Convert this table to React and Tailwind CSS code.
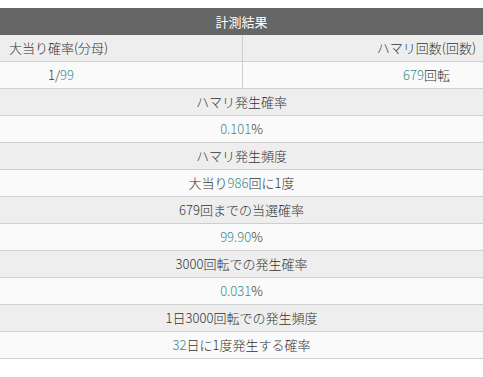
const font = { fontFamily: '"Noto Sans CJK JP", sans-serif' };

function Num({ children }) {
  return <span className="text-[#3f8a8c]">{children}</span>;
}

const rows = [
  { label: 'ハマリ発生確率', value: <><Num>0.101</Num>%</> },
  { label: 'ハマリ発生頻度', value: <>大当り<Num>986</Num>回に1度</> },
  { label: '679回までの当選確率', value: <><Num>99.90</Num>%</> },
  { label: '3000回転での発生確率', value: <><Num>0.031</Num>%</> },
  { label: '1日3000回転での発生頻度', value: <><Num>32</Num>日に1度発生する確率</> },
];

export default function App() {
  return (
    <div className="min-h-[377px] bg-white pt-2 text-[13px] font-light text-[#333]" style={font}>
      <div className="w-full">
        {/* title */}
        <div className="flex h-[27px] items-center justify-center bg-[#666666] font-normal text-white">
          計測結果
        </div>

        {/* inputs */}
        <div className="flex h-[27px] border-b border-[#cfcfcf] bg-[#eeeeee]">
          <div className="flex w-[243px] items-center border-r border-[#cfcfcf] pl-[9px]">大当り確率(分母)</div>
          <div className="flex flex-1 items-center justify-end pr-[7px]">ハマリ回数(回数)</div>
        </div>
        <div className="flex h-[27px] border-b border-[#cfcfcf] bg-[#fafafa]">
          <div className="flex w-[243px] items-center border-r border-[#cfcfcf] pl-[48px]">
            1/<Num>99</Num>
          </div>
          <div className="flex flex-1 items-center justify-end pr-[33px]">
            <Num>679</Num>回転
          </div>
        </div>

        {rows.map((r) => (
          <div key={r.label}>
            <div className="flex h-[27px] items-center justify-center border-b border-[#cfcfcf] bg-[#eeeeee]">
              {r.label}
            </div>
            <div className="flex h-[27px] items-center justify-center border-b border-[#cfcfcf] bg-[#fafafa]">
              {r.value}
            </div>
          </div>
        ))}
      </div>
    </div>
  );
}
